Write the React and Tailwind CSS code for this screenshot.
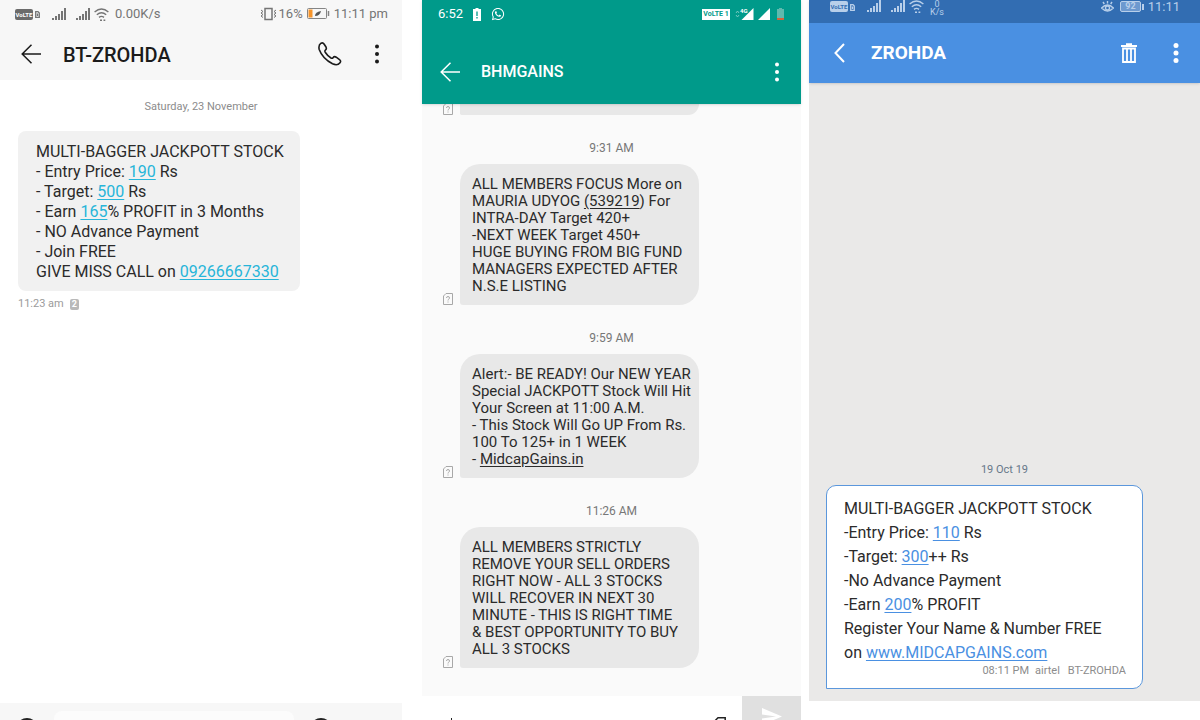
import { FaWhatsapp } from 'react-icons/fa';

const multiBagger = [
  [{ text: 'MULTI-BAGGER JACKPOTT STOCK' }],
  [{ text: '- Entry Price: ' }, { text: '190', href: '#' }, { text: ' Rs' }],
  [{ text: '- Target: ' }, { text: '500', href: '#' }, { text: ' Rs' }],
  [{ text: '- Earn ' }, { text: '165', href: '#' }, { text: '% PROFIT in 3 Months' }],
  [{ text: '- NO Advance Payment' }],
  [{ text: '- Join FREE' }],
  [{ text: 'GIVE MISS CALL on ' }, { text: '09266667330', href: 'tel:09266667330' }],
];

const gainsThread = [
  {
    time: '9:31 AM',
    lines: [
      [{ text: 'ALL MEMBERS FOCUS More on' }],
      [{ text: 'MAURIA UDYOG ' }, { text: '(539219', href: '#' }, { text: ') For' }],
      [{ text: 'INTRA-DAY Target 420+' }],
      [{ text: '-NEXT WEEK Target 450+' }],
      [{ text: 'HUGE BUYING FROM BIG FUND' }],
      [{ text: 'MANAGERS EXPECTED AFTER' }],
      [{ text: 'N.S.E LISTING' }],
    ],
  },
  {
    time: '9:59 AM',
    lines: [
      [{ text: 'Alert:- BE READY! Our NEW YEAR' }],
      [{ text: 'Special JACKPOTT Stock Will Hit' }],
      [{ text: 'Your Screen at 11:00 A.M.' }],
      [{ text: '- This Stock Will Go UP From Rs.' }],
      [{ text: '100 To 125+ in 1 WEEK' }],
      [{ text: '- ' }, { text: 'MidcapGains.in', href: '#' }],
    ],
  },
  {
    time: '11:26 AM',
    lines: [
      [{ text: 'ALL MEMBERS STRICTLY' }],
      [{ text: 'REMOVE YOUR SELL ORDERS' }],
      [{ text: 'RIGHT NOW - ALL 3 STOCKS' }],
      [{ text: 'WILL RECOVER IN NEXT 30' }],
      [{ text: 'MINUTE - THIS IS RIGHT TIME' }],
      [{ text: '& BEST OPPORTUNITY TO BUY' }],
      [{ text: 'ALL 3 STOCKS' }],
    ],
  },
];

const octoberOffer = [
  [{ text: 'MULTI-BAGGER JACKPOTT STOCK' }],
  [{ text: '-Entry Price: ' }, { text: '110', href: '#' }, { text: ' Rs' }],
  [{ text: '-Target: ' }, { text: '300', href: '#' }, { text: '++ Rs' }],
  [{ text: '-No Advance Payment' }],
  [{ text: '-Earn ' }, { text: '200', href: '#' }, { text: '% PROFIT' }],
  [{ text: 'Register Your Name & Number FREE' }],
  [{ text: 'on ' }, { text: 'www.MIDCAPGAINS.com', href: '#' }],
];

function Lines({ lines, linkClass = '' }) {
  return lines.map((parts, i) => (
    <p key={i} className="whitespace-pre">
      {parts.map((part, j) =>
        part.href ? (
          <a key={j} href={part.href} className={`underline underline-offset-2 ${linkClass}`}>
            {part.text}
          </a>
        ) : (
          part.text
        )
      )}
    </p>
  ));
}

function ArrowLeft() {
  return (
    <svg width="20" height="20" viewBox="0 0 20 20" fill="none" stroke="currentColor" strokeWidth="1.5">
      <path d="M10.5 0.7 1.2 10l9.3 9.3M1.2 10H20" />
    </svg>
  );
}

function Dots({ radius = 2 }) {
  return (
    <svg width="6" height="22" viewBox="0 0 6 22" fill="currentColor">
      <circle cx="3" cy="3.5" r={radius} />
      <circle cx="3" cy="11" r={radius} />
      <circle cx="3" cy="18.5" r={radius} />
    </svg>
  );
}

function PhoneIcon() {
  return (
    <svg width="24" height="24" viewBox="0 0 24 24" fill="none" stroke="currentColor" strokeWidth="1.6" strokeLinejoin="round">
      <path d="M3 1.2Q5 .3 6.200 2.200L8 5Q9 7 7.200 8.300 6.600 9 7.200 10.200 9.500 13.800 13 16 14.300 16.700 15 15.700 16.300 14 18.200 15.200L21.500 17.600Q23.400 19 22 20.800 19.500 24 14.500 21.800 4.500 16.500 1.200 7.500.2 3 3 1.200Z" />
    </svg>
  );
}

function SignalBars() {
  return (
    <svg width="14" height="12" viewBox="0 0 14 12" fill="currentColor">
      <path d="M0 10h2v2H0zM3 8h2v4H3zM6 6h2v6H6zM9 3h2v9H9zM12 0h2v12h-2z" />
    </svg>
  );
}

function WifiIcon() {
  return (
    <svg width="15" height="13" viewBox="0 0 15 13" fill="none" stroke="currentColor" strokeWidth="1.4">
      <path d="M.6 4Q7.5-2 14.4 4M2.8 6.8q4.7-4 9.4 0M5 9.4q2.5-2 5 0" />
      <path d="M6 12.2h2M9.5 12.2h1.8" />
    </svg>
  );
}

function SimCard() {
  return (
    <svg width="5" height="7" viewBox="0 0 5 7" fill="none" stroke="currentColor" strokeWidth="1.3">
      <path d="M.7.7H3L4.3 2v4.300H.7zM2.500 2.500v2.500" />
    </svg>
  );
}

function UnknownSim() {
  return (
    <svg width="10" height="12" viewBox="0 0 10 12" fill="none" stroke="#a8a8a8" strokeWidth="1" className="shrink-0">
      <path d="M3 .5h6.500v11h-9V3z" />
      <path d="M3.500 5q0-1.500 1.500-1.500T6.500 5q0 .8-.8 1.200T5 7.500M5 8.500v1" />
    </svg>
  );
}

function VolteBadge({ className }) {
  return (
    <span className={`w-[18px] rounded-xs text-center text-[6px] leading-[11px] font-bold ${className}`}>VoLTE</span>
  );
}

function OfferPhone() {
  return (
    <section className="flex min-w-0 flex-[402] flex-col bg-white mr-5">
      <header className="h-20 bg-[#f7f7f7]">
        <div className="flex h-7 items-center pl-[15px] pr-3.5 text-[13px] text-[#757575]">
          <VolteBadge className="bg-[#6b6b6b] text-white" />
          <span className="ml-0.5"><SimCard /></span>
          <span className="ml-3"><SignalBars /></span>
          <span className="ml-2.5"><SignalBars /></span>
          <span className="ml-1"><WifiIcon /></span>
          <span className="ml-1.5">0.00K/s</span>
          <svg className="ml-auto" width="17" height="14" viewBox="0 0 17 14" fill="none" stroke="currentColor">
            <path d="M5 1.500h7v11H5z" strokeWidth="1.500" />
            <path d="M1 3l2 1.500L1 6l2 1.500L1 9l2 1.500M16 3l-2 1.500L16 6l-2 1.500L16 9l-2 1.500" />
          </svg>
          <span className="ml-0.5">16%</span>
          <svg className="ml-1" width="23" height="12" viewBox="0 0 23 12" fill="none">
            <rect x=".5" y=".5" width="19" height="10" rx="1" stroke="#858585" />
            <path d="M1.500 1.500h4v8h-4z" fill="#f7952b" />
            <path d="M8 8q0-4 6-5-1 5-6 5z" fill="#555" />
            <path d="M21.500 3v5" stroke="#858585" strokeWidth="1.500" />
          </svg>
          <span className="ml-1">11:11 pm</span>
        </div>
        <div className="flex h-13 items-center pl-[21px] pr-[22px] text-[#1b1b1b]">
          <button type="button" aria-label="Back"><ArrowLeft /></button>
          <h1 className="ml-[22px] pt-px text-xl font-medium">BT-ZROHDA</h1>
          <button type="button" aria-label="Call" className="ml-auto"><PhoneIcon /></button>
          <button type="button" aria-label="More options" className="ml-8"><Dots /></button>
        </div>
      </header>

      <main className="flex-1">
        <p className="mt-[19px] text-center text-[11px] leading-4 text-[#8c8c8c]">Saturday, 23 November</p>
        <div className="ml-[18px] mt-4 w-[282px] rounded-lg bg-[#f1f1f1] pt-[11px] pb-[9px] pl-[18px] text-base leading-5 text-[#2b2b2b]">
          <Lines lines={multiBagger} linkClass="text-[#27b5d9]" />
        </div>
        <p className="ml-[18px] mt-[5px] flex items-center gap-1.5 text-[11px] leading-4 text-[#9b9b9b]">
          11:23 am
          <span className="rounded-xs bg-[#b9b9b9] px-0.5 text-[9px] leading-[11px] font-bold text-white">2</span>
        </p>
      </main>

      <footer className="flex h-[17px] items-start overflow-hidden bg-[#f7f7f7] pl-4">
        <button type="button" aria-label="Attach" className="mt-[15px] size-[22px] shrink-0 rounded-full border-2 border-[#222]" />
        <input aria-label="Message" className="ml-4 mt-2 h-8 w-60 rounded-lg bg-[#fcfcfc] outline-none" />
        <button type="button" aria-label="Emoji" className="ml-4 mt-[15px] size-[22px] shrink-0 rounded-full border-2 border-[#222]" />
      </footer>
    </section>
  );
}

function GainsPhone() {
  return (
    <section className="flex min-w-0 flex-[379] flex-col bg-[#fafafa] mr-2">
      <header className="relative h-26 bg-[#009a8a] text-white shadow">
        <div className="flex h-7 items-center pl-4 pr-4 text-[13px]">
          <span>6:52</span>
          <svg className="ml-2.5" width="8" height="13" viewBox="0 0 8 13" fill="#fff">
            <path d="M2.500 0h3v1H8v12H0V1h2.500z" />
            <path d="M4 3.500V8M4 9v1.500" stroke="#009a8a" strokeWidth="1.300" />
          </svg>
          <FaWhatsapp className="ml-2.5" size={14} />
          <span className="ml-auto w-7 bg-white text-center text-[7px] leading-[11px] font-bold text-[#009a8a]">VoLTE 1</span>
          <svg className="ml-[5px]" width="19" height="14" viewBox="0 0 19 14" fill="#fff">
            <path d="M18.500 1v12h-12z" />
            <path d="M1 6l1.500-2L4 6M1 8l1.500 2L4 8" fill="none" stroke="#8fd0c9" strokeWidth=".8" />
            <text x="5" y="6" fontSize="6" fontWeight="700" stroke="#009a8a" strokeWidth="1" paintOrder="stroke">4G</text>
          </svg>
          <svg className="ml-1" width="12" height="12" viewBox="0 0 12 12" fill="#fff">
            <path d="M12 0v12H0z" />
          </svg>
          <svg className="ml-[7px] mr-px" width="7" height="12" viewBox="0 0 7 12">
            <path d="M2 0h3v1h2v9H0V1h2z" fill="#5fb9ae" />
            <path d="M0 10h7v2H0z" fill="#d9603a" />
          </svg>
        </div>
        <div className="flex h-[88px] items-center pl-[18px] pr-[21px]">
          <button type="button" aria-label="Back"><ArrowLeft /></button>
          <h1 className="ml-[21px] font-medium">BHMGAINS</h1>
          <button type="button" aria-label="More options" className="ml-auto"><Dots /></button>
        </div>
      </header>

      <main className="flex-1">
        <div className="flex h-[11px] items-end gap-[7px] pl-[21px]">
          <UnknownSim />
          <div className="h-full w-[239px] rounded-br-[20px] rounded-bl-[3px] bg-[#e8e8e8]" />
        </div>
        {gainsThread.map(({ time, lines }) => (
          <article key={time}>
            <p className="pt-[25px] pb-2 text-center text-xs leading-4 text-[#777]">{time}</p>
            <div className="flex items-end gap-[7px] pl-[21px]">
              <UnknownSim />
              <div className="w-[239px] rounded-[20px] rounded-bl-[3px] bg-[#e8e8e8] pt-3 pb-[10px] pl-3 text-[15px] leading-[17px] text-[#2b2b2b]">
                <Lines lines={lines} />
              </div>
            </div>
          </article>
        ))}
      </main>

      <footer className="flex h-6 overflow-hidden bg-white">
        <button type="button" aria-label="Attach" className="ml-[29px] mt-[22px] h-4 w-px bg-[#222]" />
        <input aria-label="Message" className="ml-6 h-12 min-w-0 flex-1 bg-transparent outline-none" />
        <svg className="mt-[21px] mr-4 shrink-0" width="13" height="16" viewBox="0 0 13 16" fill="none" stroke="#222" strokeWidth="1.500">
          <path d="M5 .8h7.200v14.400H.8V5z" />
        </svg>
        <button type="button" aria-label="Send" className="flex h-12 w-[59px] shrink-0 justify-center bg-[#e0e0e0] pt-3">
          <svg width="20" height="17" viewBox="0 0 20 17" fill="#fff">
            <path d="M0 0l20 8.500L0 17v-6.500l14-2L0 6.500z" />
          </svg>
        </button>
      </footer>
    </section>
  );
}

function AirtelPhone() {
  return (
    <section className="flex min-w-0 flex-[391] flex-col bg-[#eae9e8]">
      <header className="h-[83px] bg-[#4a90e2] text-white shadow-sm">
        <div className="flex h-[23px] items-start overflow-hidden bg-[#326db2] pl-[21px] pr-5 text-[13px] leading-[14px] text-[#b8cfea]">
          <VolteBadge className="mt-px bg-[#b8cfea] text-[#326db2]" />
          <span className="ml-0.5 mt-1"><SimCard /></span>
          <span className="ml-3"><SignalBars /></span>
          <span className="ml-2.5"><SignalBars /></span>
          <span className="ml-1"><WifiIcon /></span>
          <span className="ml-1.5 text-center text-[9px] leading-[8px]">0<br />K/s</span>
          <svg className="ml-auto mt-px" width="13" height="12" viewBox="0 0 13 12" fill="none" stroke="currentColor" strokeWidth="1.400">
            <path d="M.6 7q5.900-6 11.800 0-5.900 6-11.800 0zM6.500 0v2.500M2 1l1.300 2M11 1 9.700 3" />
            <circle cx="6.500" cy="7" r="2" />
          </svg>
          <span className="ml-1.5 mt-px rounded-xs border border-current bg-[#6d99cf] px-1 text-[9px] leading-[9px] font-bold">92</span>
          <span className="ml-px mt-1 h-1.5 w-0.5 bg-current" />
          <span className="ml-1">11:11</span>
        </div>
        <div className="flex h-15 items-center pl-[25px] pr-[21px]">
          <button type="button" aria-label="Back">
            <svg width="11" height="20" viewBox="0 0 11 20" fill="none" stroke="currentColor" strokeWidth="2">
              <path d="M10 1 1.500 10l8.500 9" />
            </svg>
          </button>
          <h1 className="ml-[26px] pt-px text-[19px] font-bold">ZROHDA</h1>
          <button type="button" aria-label="Delete" className="ml-auto">
            <svg width="16" height="20" viewBox="0 0 16 20" fill="none" stroke="currentColor">
              <path d="M0 3h16M5 1.200h6" strokeWidth="2" />
              <path d="M2 5.500V19h12V5.500zM6 6v12M10 6v12" strokeWidth="1.800" />
            </svg>
          </button>
          <button type="button" aria-label="More options" className="ml-9"><Dots radius={2.5} /></button>
        </div>
      </header>

      <main className="flex flex-1 flex-col justify-end pb-3">
        <p className="mb-[7px] text-center text-[11px] leading-4 text-[#667789]">19 Oct 19</p>
        <div className="ml-[17px] w-[317px] rounded-[10px] rounded-bl-none border border-[#5b97dc] bg-white pt-[11px] pb-[11px] pl-[17px] pr-4 leading-6 text-[#2b2b2b]">
          <Lines lines={octoberOffer} linkClass="text-[#4a90e2]" />
          <p className="flex justify-end text-[11px] leading-3 text-[#8c8c8c]">
            <span>08:11 PM</span>
            <span className="ml-1.5">airtel</span>
            <span className="ml-2">BT-ZROHDA</span>
          </p>
        </div>
      </main>
      <footer className="h-[19px] bg-white" />
    </section>
  );
}

export default function App() {
  return (
    <div className="flex h-screen overflow-hidden bg-white font-['Roboto',sans-serif]">
      <OfferPhone />
      <GainsPhone />
      <AirtelPhone />
    </div>
  );
}
